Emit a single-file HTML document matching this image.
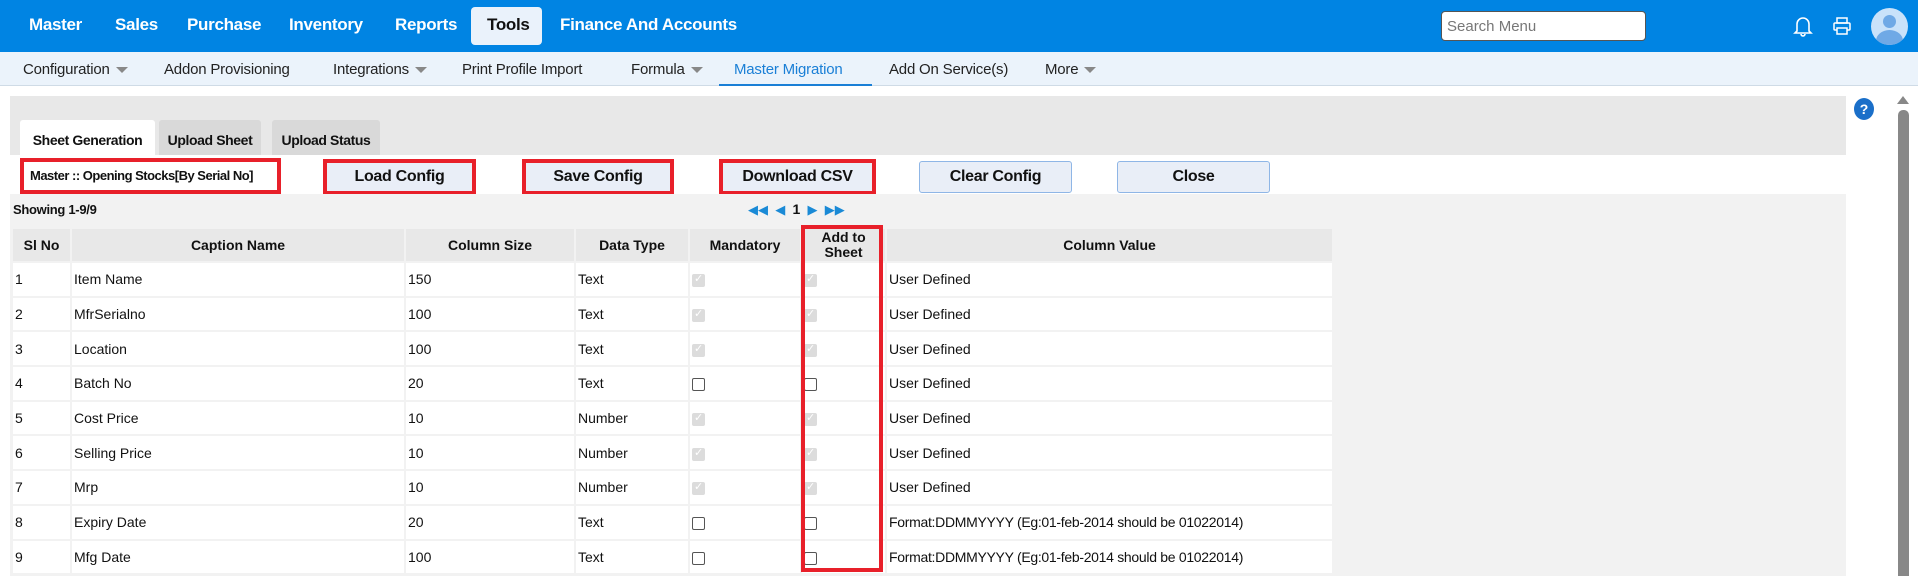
<!DOCTYPE html>
<html><head><meta charset="utf-8"><style>
*{box-sizing:border-box;margin:0;padding:0}
body{width:1918px;height:576px;overflow:hidden;background:#fff;font-family:"Liberation Sans",sans-serif;color:#111;position:relative}
.a{position:absolute;white-space:nowrap}
.top{left:0;top:0;width:1918px;height:52px;background:#0084e3}
.nav{top:15px;font-size:17px;font-weight:bold;color:#fff;letter-spacing:-0.3px}
.sub{left:0;top:52px;width:1918px;height:34px;background:#ebf3fb;border-bottom:1px solid #cfdbe6}
.sn{top:61px;font-size:15px;color:#222;letter-spacing:-0.2px}
.car{display:inline-block;width:0;height:0;border-left:6px solid transparent;border-right:6px solid transparent;border-top:6px solid #888;margin-left:6px;vertical-align:middle}
.btn{height:31px;background:#e9eef7;border:1px solid #8fb6e6;border-radius:3px;font-size:16px;font-weight:bold;text-align:center;line-height:29px;letter-spacing:-0.3px}
.red{border:4px solid #e8202a;border-radius:0;line-height:23px}
.tab{top:120px;height:35px;background:#d9d9d9;font-size:14px;font-weight:bold;text-align:center;padding-top:12px;letter-spacing:-0.4px;border-radius:3px 3px 0 0}
table{border-collapse:collapse;font-size:14px;table-layout:fixed}
td,th{border-right:2px solid #f2f2f2;border-bottom:2px solid #f2f2f2;padding:0 2px;overflow:hidden;white-space:nowrap}
th{background:#e8e8e8;height:33px;font-size:14px;line-height:15px}
td{height:34.7px;background:#fff}
.cb{display:inline-block;width:13px;height:13px;border-radius:2px;vertical-align:middle}
.dis{background:#dcdcdc;position:relative}
.dis:after{content:"✓";position:absolute;left:2px;top:-2px;font-size:11px;color:#fff}
.emp{border:1px solid #555;background:#fff}
</style></head><body>
<div class="a top"></div>
<div class="a nav" style="left:29px">Master</div>
<div class="a nav" style="left:115px">Sales</div>
<div class="a nav" style="left:187px">Purchase</div>
<div class="a nav" style="left:289px">Inventory</div>
<div class="a nav" style="left:395px">Reports</div>
<div class="a" style="left:471px;top:7px;width:71px;height:38px;background:#eaf2fb;border-radius:4px"></div>
<div class="a nav" style="left:487px;color:#111">Tools</div>
<div class="a nav" style="left:560px">Finance And Accounts</div>
<div class="a" style="left:1441px;top:11px;width:205px;height:30px;background:#fff;border:1px solid #555;border-radius:4px;font-size:15px;color:#777;padding:6px 0 0 5px">Search Menu</div>
<svg class="a" style="left:1793px;top:14px" width="20" height="24" viewBox="0 0 20 24"><path d="M4 17V10a6 6 0 0 1 12 0v7l2 2H2z M8 20a2 2 0 0 0 4 0" fill="none" stroke="#fff" stroke-width="1.6"/></svg>
<svg class="a" style="left:1832px;top:17px" width="20" height="18" viewBox="0 0 20 18"><rect x="5" y="1" width="10" height="5" fill="none" stroke="#fff" stroke-width="1.5"/><rect x="2" y="6" width="16" height="7" rx="1" fill="none" stroke="#fff" stroke-width="1.5"/><rect x="5" y="11" width="10" height="6" fill="#0084e3" stroke="#fff" stroke-width="1.5"/></svg>
<div class="a" style="left:1871px;top:8px;width:37px;height:37px;border-radius:50%;background:#c9e2fa;overflow:hidden"><div class="a" style="left:12px;top:7px;width:13px;height:13px;border-radius:50%;background:#6fa9e6"></div><div class="a" style="left:5px;top:22px;width:27px;height:22px;border-radius:50%;background:#6fa9e6"></div></div>

<div class="a sub"></div>
<div class="a sn" style="left:23px">Configuration<span class="car"></span></div>
<div class="a sn" style="left:164px">Addon Provisioning</div>
<div class="a sn" style="left:333px">Integrations<span class="car"></span></div>
<div class="a sn" style="left:462px">Print Profile Import</div>
<div class="a sn" style="left:631px">Formula<span class="car"></span></div>
<div class="a sn" style="left:734px;color:#1a7fd6">Master Migration</div>
<div class="a" style="left:719px;top:84px;width:153px;height:2px;background:#1a7fd6"></div>
<div class="a sn" style="left:889px">Add On Service(s)</div>
<div class="a sn" style="left:1045px">More<span class="car"></span></div>

<div class="a" style="left:10px;top:96px;width:1836px;height:59px;background:#e8e8e8"></div>
<div class="a" style="left:1854px;top:98px;width:20px;height:22px;border-radius:50%;background:#1a6fc9;color:#fff;font-size:14px;font-weight:bold;text-align:center;line-height:22px">?</div>
<div class="a tab" style="left:20px;width:135px;height:36px;background:#fff">Sheet Generation</div>
<div class="a tab" style="left:159px;width:102px">Upload Sheet</div>
<div class="a tab" style="left:272px;width:108px">Upload Status</div>

<div class="a btn red" style="left:20px;top:158px;width:261px;height:36px;background:#fff;font-size:13px;line-height:28px;text-align:left;padding-left:6px;letter-spacing:-0.5px">Master :: Opening Stocks[By Serial No]</div>
<div class="a btn red" style="left:323px;top:159px;width:153px;height:36px;line-height:28px">Load Config</div>
<div class="a btn red" style="left:522px;top:159px;width:152px;height:36px;line-height:28px">Save Config</div>
<div class="a btn red" style="left:719px;top:159px;width:157px;height:36px;line-height:28px">Download CSV</div>
<div class="a btn" style="left:919px;top:161px;width:153px;height:32px">Clear Config</div>
<div class="a btn" style="left:1117px;top:161px;width:153px;height:32px">Close</div>

<div class="a" style="left:10px;top:194px;width:1836px;height:382px;background:#f2f2f2"></div>
<div class="a" style="left:13px;top:202px;font-size:13px;font-weight:bold;letter-spacing:-0.3px">Showing 1-9/9</div>
<div class="a" style="left:748px;top:201px;font-size:13px;color:#1a8ad6;letter-spacing:0px">&#9664;&#9664;&nbsp;&nbsp;&#9664;&nbsp; <span style="color:#111;font-weight:bold;font-size:14px">1</span> &nbsp;&#9654;&nbsp;&nbsp;&#9654;&#9654;</div>

<table class="a" style="left:13px;top:229px;width:1320px">
<colgroup><col style="width:58px"><col style="width:334px"><col style="width:170px"><col style="width:114px"><col style="width:112px"><col style="width:85px"><col style="width:447px"></colgroup>
<tr><th>Sl No</th><th>Caption Name</th><th>Column Size</th><th>Data Type</th><th>Mandatory</th><th>Add to<br>Sheet</th><th>Column Value</th></tr>
<tr><td>1</td><td>Item Name</td><td>150</td><td>Text</td><td><span class="cb dis"></span></td><td><span class="cb dis"></span></td><td>User Defined</td></tr>
<tr><td>2</td><td>MfrSerialno</td><td>100</td><td>Text</td><td><span class="cb dis"></span></td><td><span class="cb dis"></span></td><td>User Defined</td></tr>
<tr><td>3</td><td>Location</td><td>100</td><td>Text</td><td><span class="cb dis"></span></td><td><span class="cb dis"></span></td><td>User Defined</td></tr>
<tr><td>4</td><td>Batch No</td><td>20</td><td>Text</td><td><span class="cb emp"></span></td><td><span class="cb emp"></span></td><td>User Defined</td></tr>
<tr><td>5</td><td>Cost Price</td><td>10</td><td>Number</td><td><span class="cb dis"></span></td><td><span class="cb dis"></span></td><td>User Defined</td></tr>
<tr><td>6</td><td>Selling Price</td><td>10</td><td>Number</td><td><span class="cb dis"></span></td><td><span class="cb dis"></span></td><td>User Defined</td></tr>
<tr><td>7</td><td>Mrp</td><td>10</td><td>Number</td><td><span class="cb dis"></span></td><td><span class="cb dis"></span></td><td>User Defined</td></tr>
<tr><td>8</td><td>Expiry Date</td><td>20</td><td>Text</td><td><span class="cb emp"></span></td><td><span class="cb emp"></span></td><td style="letter-spacing:-0.3px">Format:DDMMYYYY (Eg:01-feb-2014 should be 01022014)</td></tr>
<tr><td>9</td><td>Mfg Date</td><td>100</td><td>Text</td><td><span class="cb emp"></span></td><td><span class="cb emp"></span></td><td style="letter-spacing:-0.3px">Format:DDMMYYYY (Eg:01-feb-2014 should be 01022014)</td></tr>
</table>
<div class="a" style="left:801px;top:225px;width:82px;height:347px;border:4px solid #e8202a"></div>

<div class="a" style="left:1897px;top:96px;width:0;height:0;border-left:6px solid transparent;border-right:6px solid transparent;border-bottom:8px solid #888"></div>
<div class="a" style="left:1898px;top:110px;width:11px;height:466px;background:#888;border-radius:5px 5px 0 0"></div>
</body></html>
